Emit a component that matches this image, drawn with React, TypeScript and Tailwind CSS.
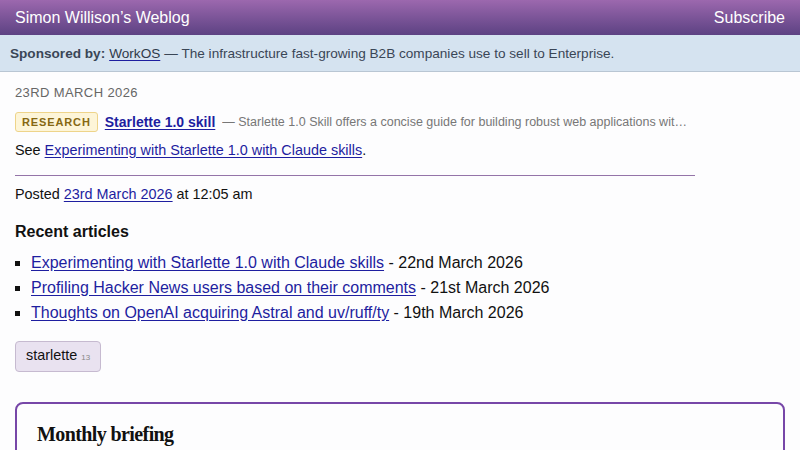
export default function App() {
  const articles = [
    { title: "Experimenting with Starlette 1.0 with Claude skills", date: "22nd March 2026" },
    { title: "Profiling Hacker News users based on their comments", date: "21st March 2026" },
    { title: "Thoughts on OpenAI acquiring Astral and uv/ruff/ty", date: "19th March 2026" },
  ];

  return (
    <div className="min-h-[450px] bg-[#fdfdfe] font-['Liberation_Sans',Arial,sans-serif] text-[#111]">
      {/* header */}
      <header className="flex h-[35px] items-center justify-between bg-gradient-to-b from-[#9c68ae] to-[#5d4283] px-[15px] text-white">
        <span className="text-[16px]">Simon Willison’s Weblog</span>
        <span className="text-[16px]">Subscribe</span>
      </header>

      {/* sponsor */}
      <div className="flex h-[37px] items-center border-b border-[#b9c6d3] bg-[#d5e3f0] px-[10px] pt-[2px] text-[13.6px] text-[#3a4656]">
        <b className="mr-1">Sponsored by:</b>
        <a className="text-[#2f3a4a] underline decoration-[#1e1ea0] underline-offset-2">WorkOS</a>
        <span className="ml-1">— The infrastructure fast-growing B2B companies use to sell to Enterprise.</span>
      </div>

      <main className="px-[15px]">
        <div className="pt-[11px] text-[13px] tracking-[0.03em] text-[#666]">23RD MARCH 2026</div>

        <div className="mt-[9px] flex w-[676px] items-center gap-[7px]">
          <span className="rounded-[3px] border border-[#eed48a] bg-[#fdf5d8] px-[6px] py-[1px] text-[11px] font-bold tracking-[0.08em] text-[#866812]">
            RESEARCH
          </span>
          <a className="shrink-0 text-[14px] font-bold text-[#1e1ea0] underline underline-offset-2">Starlette 1.0 skill</a>
          <span className="truncate text-[12.5px] text-[#777]">
            — Starlette 1.0 Skill offers a concise guide for building robust web applications with Starlette 1.0
          </span>
        </div>

        <p className="mt-[7px] text-[14.4px]">
          See <a className="text-[#1e1ea0] underline underline-offset-2">Experimenting with Starlette 1.0 with Claude skills</a>.
        </p>

        <hr className="mt-[14px] w-[680px] border-t border-[#9474a8]" />

        <p className="mt-[8px] text-[14.4px]">
          Posted <a className="text-[#1e1ea0] underline underline-offset-2">23rd March 2026</a> at 12:05 am
        </p>

        <h3 className="mt-[14px] text-[16px] font-bold">Recent articles</h3>

        <ul className="mt-[6px] list-[square] pl-[16px] text-[16px] leading-[25px]">
          {articles.map((a) => (
            <li key={a.title}>
              <a className="text-[#1e1ea0] underline underline-offset-2">{a.title}</a> - {a.date}
            </li>
          ))}
        </ul>

        <div className="mt-[16px] flex">
          <span className="flex h-[31px] items-center rounded-[4px] border border-[#c6bad0] bg-[#e9e2f0] px-[10px] text-[14.4px]">
            starlette
            <span className="ml-[4px] mt-[3px] text-[8px] text-[#888]">13</span>
          </span>
        </div>

        <section className="mt-[30px] h-[60px] rounded-[8px] border-2 border-[#7747a8] px-[20px] pt-[15px]">
          <h2 className="font-['Liberation_Serif',serif] text-[20px] font-bold tracking-[-0.03em]">Monthly briefing</h2>
        </section>
      </main>
    </div>
  );
}
